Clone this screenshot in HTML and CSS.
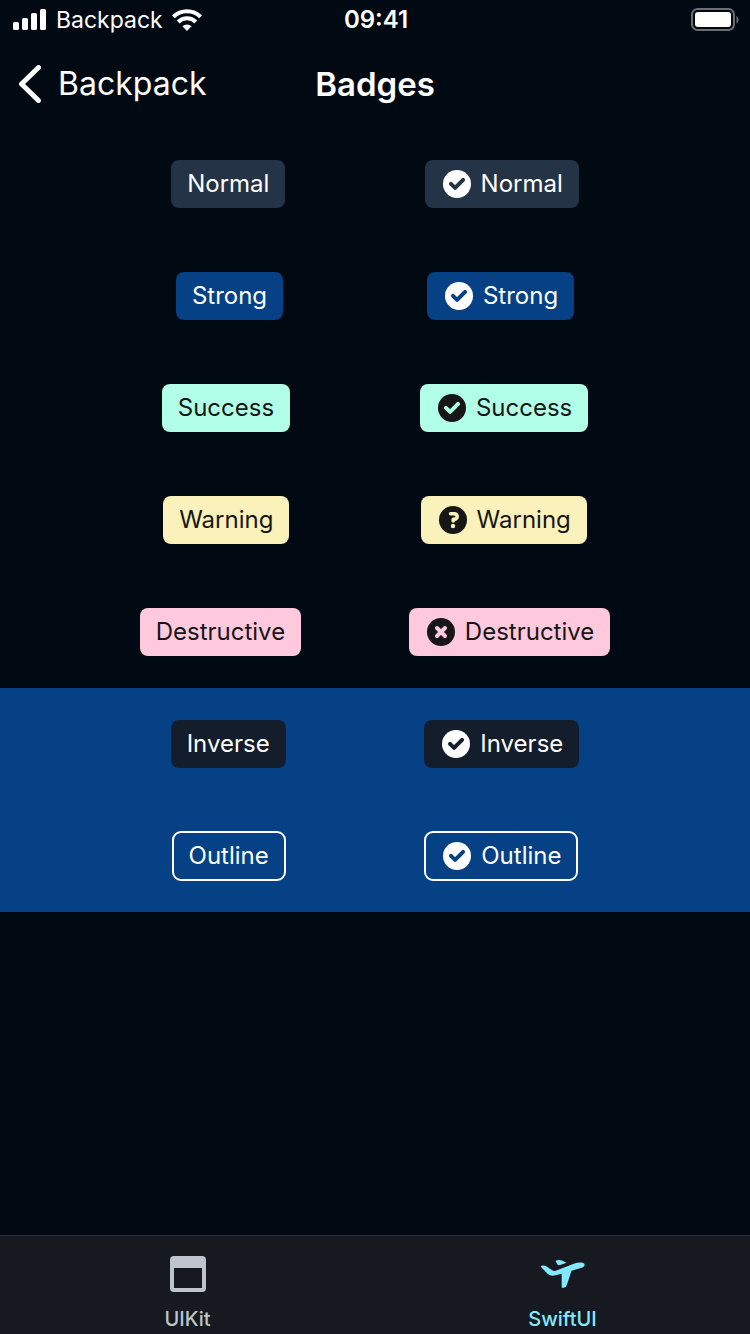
FILE: index.html
```html
<!DOCTYPE html>
<html lang="en">
<head>
<meta charset="utf-8">
<meta name="viewport" content="width=device-width, initial-scale=1">
<title>Badges</title>
<link rel="stylesheet" href="styles.css">
</head>
<body>
<svg class="symbols" aria-hidden="true">
  <symbol id="tick" viewBox="0 0 32 32">
    <circle cx="16" cy="16" r="14" fill="currentColor"/>
    <path class="mark" d="M10 15.900l4.100 4 8-8"/>
  </symbol>
  <symbol id="help" viewBox="0 0 32 32">
    <circle cx="16" cy="16" r="14" fill="currentColor"/>
    <path class="mark mark-thin" d="M13.600 9.800h3.800a2.800 2.800 0 0 1 0 5.600h-1.200v1.600"/>
    <circle class="dot" cx="16" cy="22" r="2.200"/>
  </symbol>
  <symbol id="cross" viewBox="0 0 32 32">
    <circle cx="16" cy="16" r="14" fill="currentColor"/>
    <path class="mark" d="M12 12l8 8M20 12l-8 8"/>
  </symbol>
</svg>

<header>
  <div class="status">
    <div class="carrier">
      <svg class="signal" viewBox="0 0 34 22" fill="currentColor" aria-hidden="true">
        <rect x="0" y="13" width="6" height="8" rx="1.6"/>
        <rect x="9" y="9" width="6" height="12" rx="1.6"/>
        <rect x="18" y="4" width="6" height="17" rx="1.6"/>
        <rect x="27" y="0" width="6" height="21" rx="1.6"/>
      </svg>
      <span>Backpack</span>
      <svg class="wifi" viewBox="0 0 30 22" aria-hidden="true">
        <g fill="none" stroke="currentColor" stroke-width="4">
          <path d="M1.4 7.9a19.2 19.2 0 0 1 27.2 0"/>
          <path d="M6.2 13a12.4 12.4 0 0 1 17.6 0"/>
        </g>
        <path fill="currentColor" d="M15 22l-4.6-4.7a6.6 6.6 0 0 1 9.2 0z"/>
      </svg>
    </div>
    <time class="clock">09:41</time>
    <svg class="battery" viewBox="0 0 48 24" role="img" aria-label="Battery full">
      <rect x="1" y="1" width="42" height="21" rx="5.5" fill="none" stroke="#6b6e73" stroke-width="2"/>
      <rect x="4" y="4" width="36" height="15" rx="3" fill="currentColor"/>
      <path d="M45.500 8c2.700 1.400 2.700 6 0 7.500z" fill="#6b6e73"/>
    </svg>
  </div>
  <nav class="navbar">
    <button class="back" type="button">
      <svg class="chevron" viewBox="0 0 24 38" aria-hidden="true"><path d="M20.500 2.500L3.500 19l17 16.500"/></svg>
      <span>Backpack</span>
    </button>
    <h1 class="title">Badges</h1>
  </nav>
</header>

<main>
  <div class="row normal">
    <span class="badge">Normal</span>
    <span class="badge"><svg class="icon" aria-hidden="true"><use href="#tick"/></svg>Normal</span>
  </div>
  <div class="row strong">
    <span class="badge">Strong</span>
    <span class="badge"><svg class="icon" aria-hidden="true"><use href="#tick"/></svg>Strong</span>
  </div>
  <div class="row success">
    <span class="badge">Success</span>
    <span class="badge"><svg class="icon" aria-hidden="true"><use href="#tick"/></svg>Success</span>
  </div>
  <div class="row warning">
    <span class="badge">Warning</span>
    <span class="badge"><svg class="icon" aria-hidden="true"><use href="#help"/></svg>Warning</span>
  </div>
  <div class="row destructive">
    <span class="badge">Destructive</span>
    <span class="badge"><svg class="icon" aria-hidden="true"><use href="#cross"/></svg>Destructive</span>
  </div>
  <section class="band">
    <div class="row inverse">
      <span class="badge">Inverse</span>
      <span class="badge"><svg class="icon" aria-hidden="true"><use href="#tick"/></svg>Inverse</span>
    </div>
    <div class="row outline">
      <span class="badge">Outline</span>
      <span class="badge"><svg class="icon" aria-hidden="true"><use href="#tick"/></svg>Outline</span>
    </div>
  </section>
</main>

<footer class="tabbar">
  <button class="tab" type="button">
    <svg class="tab-icon" viewBox="0 0 48 48" aria-hidden="true">
      <path fill="currentColor" fill-rule="evenodd" d="M10 6h28a4 4 0 0 1 4 4v28a4 4 0 0 1-4 4H10a4 4 0 0 1-4-4V10a4 4 0 0 1 4-4zm0 12v20h28V18z"/>
    </svg>
    UIKit
  </button>
  <button class="tab selected" type="button" aria-current="page">
    <svg class="tab-icon" viewBox="0 0 48 48" aria-hidden="true">
      <g fill="currentColor">
        <path d="M2.500 15.800c1.500-.6 3.500-.5 5 .7l6.200 4c1 .6 2 .5 3 .2L35.500 13.500c3.500-1.200 7.500-1.500 9.300-.2 1.700 1.500.6 3.500-2 4.400L32.500 20.800c-.8 2.200-4 13-5 15-.7 1.500-2.200 2.200-4.800 2v-14L15.500 25.500c-3 .5-5.500-.3-7.500-2.200L2.500 17.400c-.6-.7-.6-1.300 0-1.600z"/>
        <path d="M16.500 11c1.500-1.200 4.500-1.300 6.500-.4l4.600 2.200-6.500 2.300c-1 .3-2 .1-2.800-.8z"/>
      </g>
    </svg>
    SwiftUI
  </button>
</footer>
</body>
</html>
```

FILE: styles.css
```css
* { box-sizing: border-box; }

body {
  margin: 0;
  min-height: 100vh;
  display: flex;
  flex-direction: column;
  background: #010913;
  color: #fff;
  font-family: Inter, "Liberation Sans", sans-serif;
}

button {
  padding: 0;
  border: 0;
  background: none;
  color: inherit;
  font: inherit;
}

.symbols { position: absolute; width: 0; height: 0; }

.status {
  display: grid;
  grid-template-columns: 1fr auto 1fr;
  align-items: center;
  height: 40px;
  padding: 0 11px 0 13px;
  font-size: 23px;
  line-height: 28px;
}
.carrier { display: flex; align-items: center; gap: 9px; }
.signal { width: 34px; height: 22px; }
.wifi { width: 30px; height: 22px; }
.clock { font-size: 24px; font-weight: 600; }
.battery { justify-self: end; width: 48px; height: 24px; }

.navbar {
  display: grid;
  grid-template-columns: 1fr auto 1fr;
  align-items: center;
  height: 88px;
  padding: 0 18px;
  line-height: 40px;
}
.back {
  display: flex;
  align-items: center;
  gap: 16px;
  font-size: 32px;
}
.chevron {
  width: 24px;
  height: 38px;
  fill: none;
  stroke: currentColor;
  stroke-width: 5;
  stroke-linecap: round;
  stroke-linejoin: round;
}
.title { margin: 0; font-size: 33px; font-weight: 600; }

main { flex: 1; }

.row {
  display: flex;
  justify-content: space-evenly;
  padding: 32px;
}
.badge {
  display: flex;
  align-items: center;
  gap: 8px;
  padding: 8px 16px;
  border-radius: 8px;
  background: var(--fill);
  font-size: 24px;
  line-height: 32px;
}
.icon { width: 32px; height: 32px; }
.mark {
  fill: none;
  stroke: var(--fill);
  stroke-width: 4;
  stroke-linecap: round;
  stroke-linejoin: round;
}
.mark-thin { stroke-width: 3.6; }
.dot { fill: var(--fill); }

.normal { --fill: #243346; }
.strong { --fill: #054184; }
.success { --fill: #b1ffe7; color: #161616; }
.warning { --fill: #faf1bb; color: #161616; }
.destructive { --fill: #ffc9dd; color: #161616; }
.inverse { --fill: #131d2b; }
.outline { --fill: #054184; }
.outline .badge { outline: 2px solid #fff; outline-offset: -1px; }
.band { background: #054184; }

.tabbar {
  display: grid;
  grid-template-columns: 1fr 1fr;
  height: 99px;
  padding-top: 14px;
  border-top: 1px solid #2b2f36;
  background: #16191f;
  color: #bdc4cb;
}
.tab {
  display: flex;
  flex-direction: column;
  align-items: center;
  gap: 9px;
  font-size: 20px;
  font-weight: 500;
  line-height: 24px;
}
.tab-icon { width: 48px; height: 48px; }
.selected { color: #84e9ff; }
```
